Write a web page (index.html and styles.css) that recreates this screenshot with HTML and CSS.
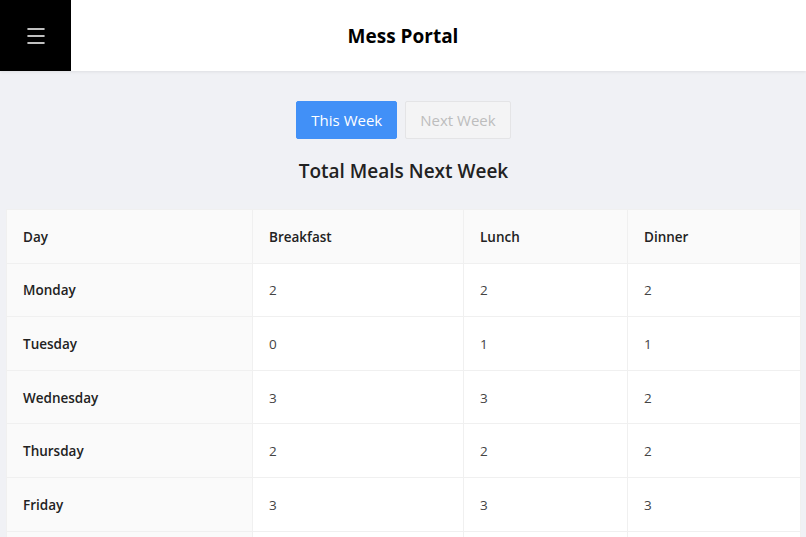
FILE: index.html
```html
<!DOCTYPE html>
<html lang="en">
<head>
    <meta charset="UTF-8">
    <meta name="viewport" content="width=device-width, initial-scale=1.0">
    <title>Mess Portal</title>
    <link rel="stylesheet" href="styles.css">
</head>
<body>

    <header class="topbar">
        <button class="menu-btn" aria-label="Menu">
            <svg width="18" height="16" viewBox="0 0 18 16">
                <path d="M1 1h16M1 8h16M1 15h16" stroke="#fff" stroke-width="1.6" stroke-linecap="round"/>
            </svg>
        </button>
        <h1 class="title">Mess Portal</h1>
    </header>

    <main class="content">
        <div class="week-switch">
            <button class="week-btn active">This Week</button>
            <button class="week-btn">Next Week</button>
        </div>

        <h2 class="section-title">Total Meals Next Week</h2>

        <table class="meals-table">
            <thead>
                <tr>
                    <th class="col-day">Day</th>
                    <th class="col-b">Breakfast</th>
                    <th class="col-l">Lunch</th>
                    <th class="col-d">Dinner</th>
                </tr>
            </thead>
            <tbody>
                <tr><th>Monday</th><td>2</td><td>2</td><td>2</td></tr>
                <tr><th>Tuesday</th><td>0</td><td>1</td><td>1</td></tr>
                <tr><th>Wednesday</th><td>3</td><td>3</td><td>2</td></tr>
                <tr><th>Thursday</th><td>2</td><td>2</td><td>2</td></tr>
                <tr><th>Friday</th><td>3</td><td>3</td><td>3</td></tr>
                <tr><th>Saturday</th><td>1</td><td>2</td><td>2</td></tr>
                <tr><th>Sunday</th><td>2</td><td>1</td><td>1</td></tr>
            </tbody>
        </table>
    </main>

</body>
</html>
```

FILE: styles.css
```css
body {
    margin: 0;
    font-family: "Open Sans", "Noto Sans", sans-serif;
    background-color: #f0f1f5;
    color: #222;
}

.topbar {
    position: relative;
    height: 71px;
    background: #fff;
    display: flex;
    align-items: center;
    justify-content: center;
    box-shadow: 0 1px 3px rgba(0, 0, 0, 0.08);
}

.menu-btn {
    position: absolute;
    left: 0;
    top: 0;
    width: 71px;
    height: 71px;
    border: none;
    background: #000;
    display: flex;
    align-items: center;
    justify-content: center;
    padding: 0;
}

.title {
    margin: 0;
    font-size: 19px;
    font-weight: 700;
    color: #000;
}

.content {
    padding: 30px 5px 0 6px;
}

.week-switch {
    display: flex;
    justify-content: center;
    gap: 8px;
}

.week-btn {
    height: 38px;
    padding: 0 14px;
    font-family: inherit;
    font-size: 15px;
    border: 1px solid #e4e4e6;
    border-radius: 2px;
    background: #f4f4f5;
    color: #bdbdbd;
}

.week-btn.active {
    background: #4190f7;
    border-color: #4190f7;
    color: #fff;
}

.section-title {
    margin: 19px 0 25px;
    text-align: center;
    font-size: 19px;
    font-weight: 600;
    color: #222;
}

.meals-table {
    width: 100%;
    border-collapse: collapse;
    background: #fff;
    font-size: 13.5px;
}

.meals-table th,
.meals-table td {
    height: 53.6px;
    padding: 1px 16px 0;
    text-align: left;
    border: 1px solid #f0f0f0;
    box-sizing: border-box;
}

.meals-table th {
    font-weight: 600;
    background: #fafafa;
    color: #222;
}

.meals-table td {
    color: #444;
}

.col-day { width: 246px; }
.col-b { width: 211px; }
.col-l { width: 164px; }
```
